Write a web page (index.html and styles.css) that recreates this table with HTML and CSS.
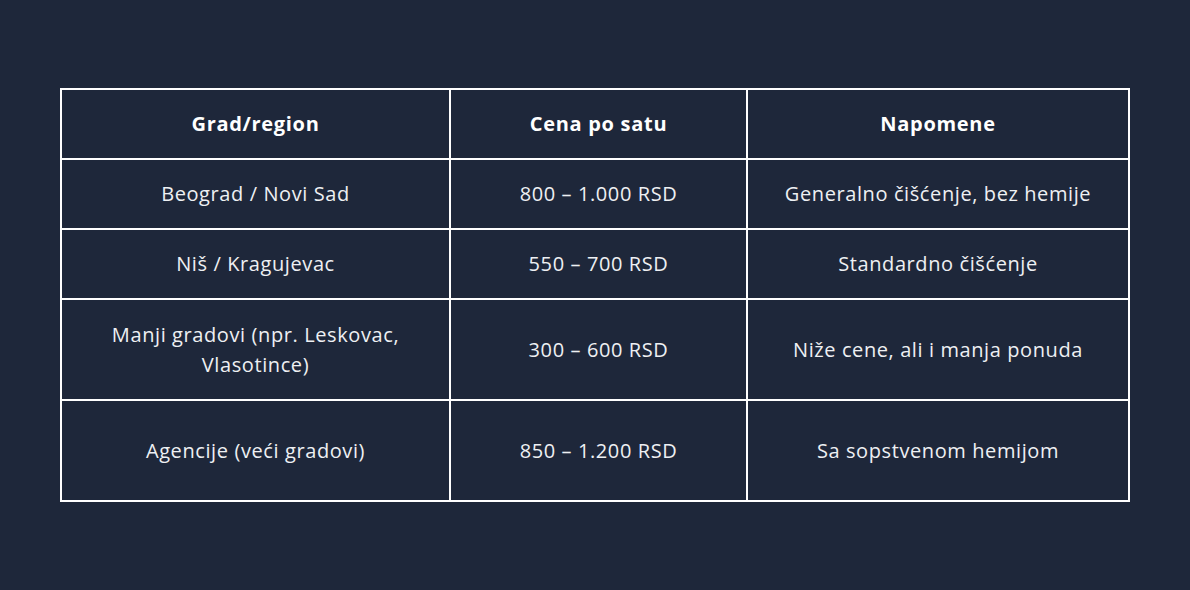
FILE: index.html
```html
<!DOCTYPE html>
<html lang="sr">
<head>
<meta charset="utf-8">
<title>Cene čišćenja</title>
<link rel="stylesheet" href="styles.css">
</head>
<body>
<main class="page">
  <table class="prices">
    <colgroup>
      <col class="c1"><col class="c2"><col class="c3">
    </colgroup>
    <thead>
      <tr class="row-short">
        <th>Grad/region</th>
        <th>Cena po satu</th>
        <th>Napomene</th>
      </tr>
    </thead>
    <tbody>
      <tr class="row-short">
        <td>Beograd / Novi Sad</td>
        <td>800 – 1.000 RSD</td>
        <td>Generalno čišćenje, bez hemije</td>
      </tr>
      <tr class="row-short">
        <td>Niš / Kragujevac</td>
        <td>550 – 700 RSD</td>
        <td>Standardno čišćenje</td>
      </tr>
      <tr class="row-tall">
        <td>Manji gradovi (npr. Leskovac,<br>Vlasotince)</td>
        <td>300 – 600 RSD</td>
        <td>Niže cene, ali i manja ponuda</td>
      </tr>
      <tr class="row-tall">
        <td>Agencije (veći gradovi)</td>
        <td>850 – 1.200 RSD</td>
        <td>Sa sopstvenom hemijom</td>
      </tr>
    </tbody>
  </table>
</main>
</body>
</html>
```
FILE: styles.css
```css
html, body {
  margin: 0;
  padding: 0;
  background: #1e273a;
}
.page {
  padding-top: 88px;
  display: flex;
  justify-content: center;
}
.prices {
  border-collapse: collapse;
  width: 1068px;
  table-layout: fixed;
  font-family: "Open Sans", "Lato", sans-serif;
  color: #eef0f3;
  font-size: 20px;
  line-height: 30px;
}
.c1 { width: 389px; }
.c2 { width: 297px; }
.c3 { width: 382px; }
.prices th,
.prices td {
  border: 2px solid #ffffff;
  text-align: center;
  vertical-align: middle;
  padding: 0 20px;
}
.prices th {
  font-weight: 700;
  color: #ffffff;
  letter-spacing: 0.7px;
}
.prices td {
  font-weight: 400;
  letter-spacing: 0.6px;
}
.row-short { height: 70px; }
.row-tall { height: 101px; }
```
